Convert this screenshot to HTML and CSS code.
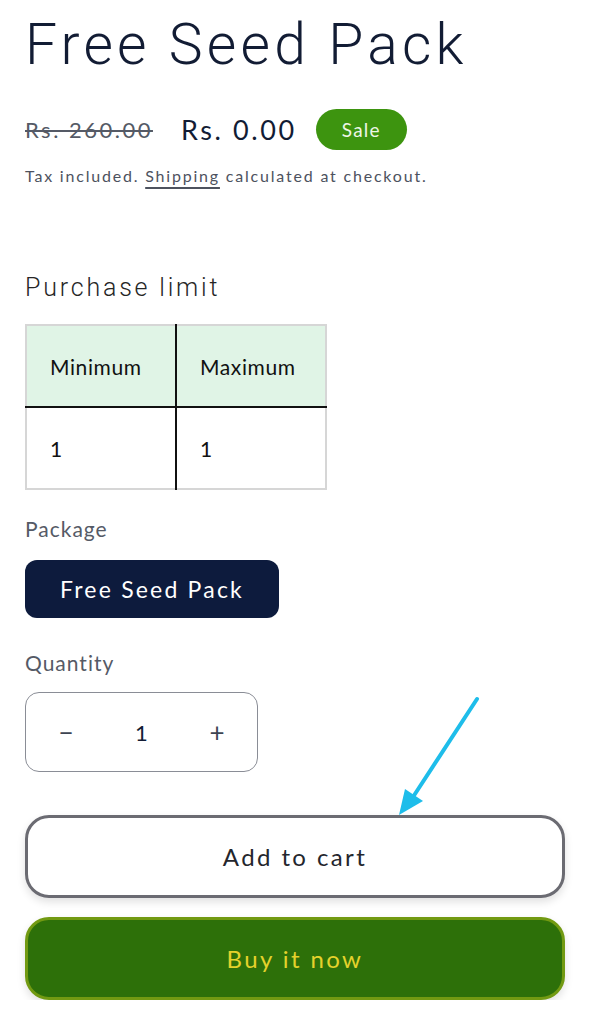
FILE: index.html
```html
<!DOCTYPE html>
<html lang="en">
<head>
    <meta charset="UTF-8">
    <title>Free Seed Pack</title>
    <link rel="stylesheet" href="styles.css">
</head>
<body>
    <div class="product">
        <h1 class="title">Free Seed Pack</h1>

        <div class="price-row">
            <s class="price-old">Rs. 260.00</s>
            <span class="price-new">Rs. 0.00</span>
            <span class="badge">Sale</span>
        </div>
        <p class="tax">Tax included. <a href="#">Shipping</a> calculated at checkout.</p>

        <h2 class="limit-title">Purchase limit</h2>
        <table class="limit-table">
            <thead>
                <tr>
                    <th>Minimum</th>
                    <th>Maximum</th>
                </tr>
            </thead>
            <tbody>
                <tr>
                    <td>1</td>
                    <td>1</td>
                </tr>
            </tbody>
        </table>

        <p class="label">Package</p>
        <button class="variant">Free Seed Pack</button>

        <p class="label label-qty">Quantity</p>
        <div class="qty">
            <button class="qty-btn">&minus;</button>
            <span class="qty-value">1</span>
            <button class="qty-btn">+</button>
        </div>

        <div class="actions">
            <button class="add-cart">Add to cart</button>
            <button class="buy-now">Buy it now</button>
            <!-- annotation arrow over the buttons -->
            <svg class="arrow" width="100" height="130" viewBox="0 0 100 130">
                <line x1="82" y1="6" x2="18" y2="104" stroke="#1ebdea" stroke-width="4" stroke-linecap="round"/>
                <polygon points="4,122 10,96 28,108" fill="#1ebdea"/>
            </svg>
        </div>
    </div>
</body>
</html>
```

FILE: styles.css
```css
body {
    margin: 0;
    background-color: #fff;
    font-family: Lato, 'Open Sans', sans-serif;
    color: #121c34;
}

.product {
    position: relative;
    padding: 0 24px 0 25px;
}

.title {
    margin: 0;
    padding-top: 10px;
    font-family: Roboto, sans-serif;
    font-weight: 300;
    font-size: 57px;
    line-height: 70px;
    letter-spacing: 4.2px;
    color: #121c34;
}

.price-row {
    display: flex;
    align-items: center;
    margin-top: 28px;
    height: 42px;
}

.price-old {
    font-size: 22px;
    color: #555a66;
    letter-spacing: 2.5px;
    margin-right: 28px;
}

.price-new {
    font-size: 27px;
    color: #121c34;
    letter-spacing: 2.6px;
    margin-right: 19px;
}

.badge {
    display: inline-flex;
    align-items: center;
    justify-content: center;
    width: 91px;
    height: 41px;
    border-radius: 21px;
    background-color: #3d940f;
    color: #eef6e6;
    font-size: 19px;
    letter-spacing: 1.2px;
}

.tax {
    margin: 16px 0 0;
    font-size: 16px;
    color: #4d525e;
    letter-spacing: 1.8px;
}

.tax a {
    color: #4d525e;
    text-decoration: underline;
    text-underline-offset: 5px;
    text-decoration-thickness: 2px;
}

.limit-title {
    margin: 88px 0 0;
    font-family: Roboto, sans-serif;
    font-weight: 300;
    font-size: 25px;
    letter-spacing: 2.8px;
    color: #262626;
}

.limit-table {
    margin-top: 22px;
    border-collapse: collapse;
    border: 2px solid #d6d6d6;
    width: 302px;
}

.limit-table th, .limit-table td {
    width: 50%;
    height: 80px;
    padding: 0 0 0 23px;
    text-align: left;
    font-weight: 400;
    font-size: 21px;
    letter-spacing: 0.6px;
    color: #111;
}

.limit-table th {
    background-color: #e0f4e6;
    border-bottom: 2px solid #111;
}

.limit-table th + th, .limit-table td + td {
    border-left: 2px solid #111;
}

.label {
    margin: 26px 0 0;
    font-size: 21px;
    color: #555a66;
    letter-spacing: 1px;
}

.label-qty {
    margin-top: 32px;
}

.variant {
    margin-top: 19px;
    width: 254px;
    height: 58px;
    border: none;
    border-radius: 12px;
    background-color: #0d1b3d;
    color: #fff;
    font-family: Lato, sans-serif;
    font-size: 23px;
    letter-spacing: 2.2px;
    cursor: pointer;
}

.qty {
    display: flex;
    align-items: center;
    justify-content: space-between;
    box-sizing: border-box;
    margin-top: 17px;
    width: 233px;
    height: 80px;
    padding: 0 20px;
    border: 1.5px solid #8a8d96;
    border-radius: 14px;
}

.qty-btn {
    width: 40px;
    border: none;
    background: none;
    font-family: Lato, sans-serif;
    font-size: 26px;
    color: #3e4452;
    cursor: pointer;
}

.qty-value {
    font-size: 22px;
    color: #121c34;
}

.actions {
    position: relative;
    display: flex;
    flex-direction: column;
    gap: 19px;
    margin-top: 43px;
}

.add-cart, .buy-now {
    width: 540px;
    height: 83px;
    border-radius: 24px;
    font-family: Lato, sans-serif;
    font-size: 24px;
    letter-spacing: 2.4px;
    cursor: pointer;
    box-shadow: 0 4px 8px rgba(0,0,0,0.12);
}

.add-cart {
    background-color: #fff;
    border: 3px solid #6b6b72;
    color: #24262d;
}

.buy-now {
    background-color: #2d7009;
    border: 3px solid #729a12;
    color: #e4d22c;
}

.arrow {
    position: absolute;
    top: -122px;
    left: 370px;
}
```
